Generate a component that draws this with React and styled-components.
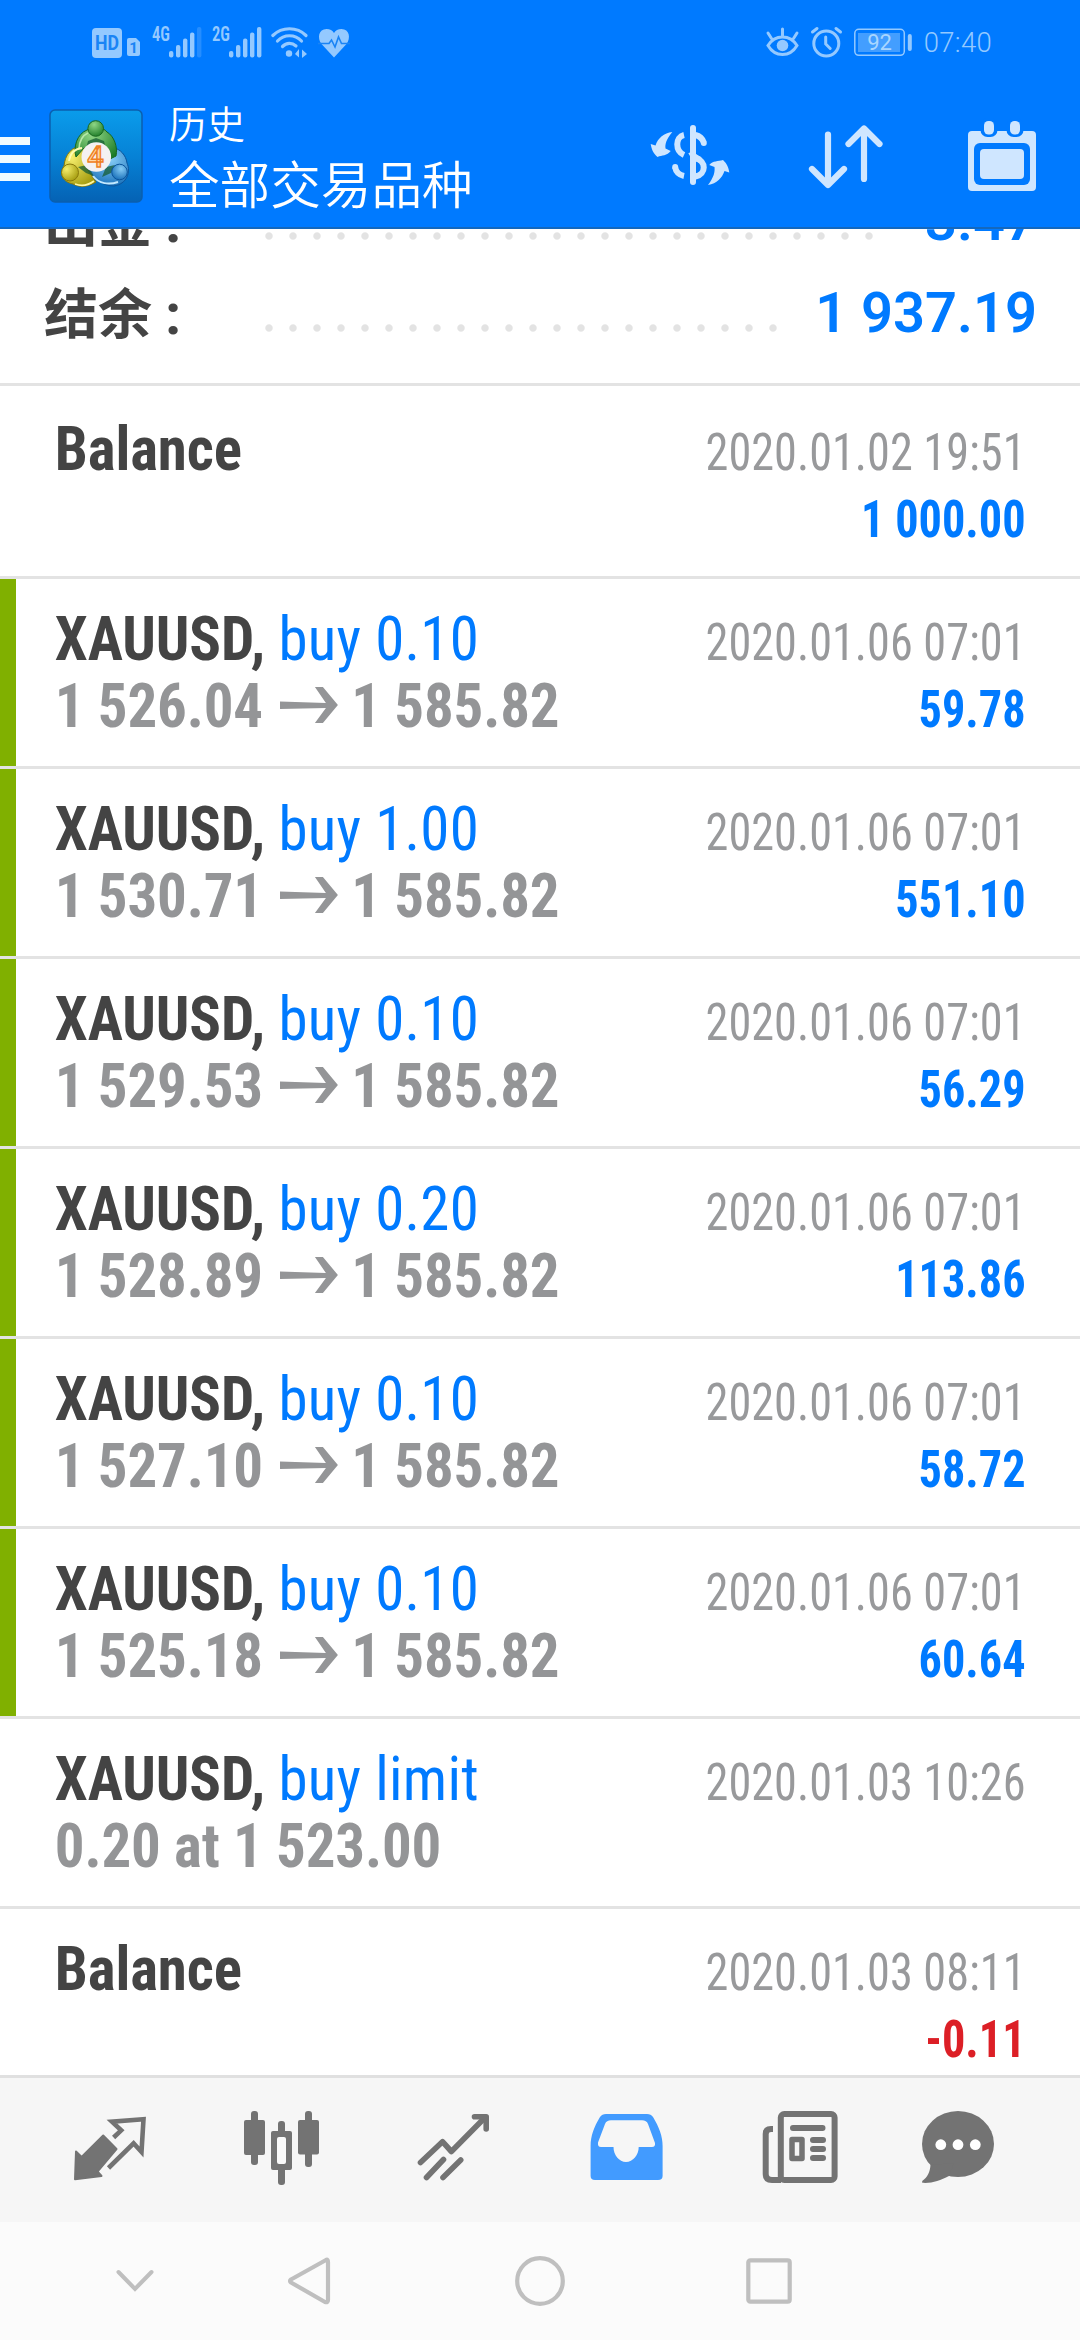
import React from 'react';
import styled, { createGlobalStyle } from 'styled-components';

const GlobalStyle = createGlobalStyle`
  body {
    margin: 0;
    background-color: #fff;
    font-family: Roboto, 'Noto Sans CJK SC', sans-serif;
  }
`;

const Screen = styled.div`
  display: flex;
  flex-direction: column;
  width: 1080px;
  height: 2340px;
  overflow: hidden;
`;

const Header = styled.header`
  flex: none;
  box-sizing: border-box;
  height: 229px;
  background-color: #007aff;
  border-bottom: 2px solid #1468bd;
`;

const StatusBar = styled.div`
  display: flex;
  align-items: center;
  justify-content: space-between;
  height: 85px;
  padding: 0 88px 0 92px;
  color: #94c9ff;
`;

const StatusGroup = styled.div`
  display: flex;
  align-items: center;
  gap: ${(p) => p.$gap}px;
`;

const StatusIcon = styled.svg`
  overflow: visible;
`;

const Clock = styled.span`
  font-size: 27.5px;
  font-weight: 350;
  line-height: 31px;
  letter-spacing: 0.3px;
`;

const Toolbar = styled.div`
  display: flex;
  align-items: center;
  height: 142px;
`;

const MenuButton = styled.div`
  display: flex;
  flex-direction: column;
  gap: 10px;
  width: 49px;
  margin-top: 6px;
`;

const MenuLine = styled.div`
  width: 30px;
  height: 8px;
  background-color: #f0fbff;
`;

const Titles = styled.div`
  flex: 1;
  margin: 2px 0 0 26px;
  color: #fff;
  font-family: 'Noto Sans CJK SC', sans-serif;
  font-weight: 350;
`;

const Title = styled.div`
  font-size: 38px;
  line-height: 50px;
`;

const Subtitle = styled.div`
  font-size: 50.6px;
  line-height: 70px;
`;

const Actions = styled.div`
  display: flex;
  gap: 70px;
  margin-top: -2px;
  padding-right: 35px;
  color: #cfe6ff;
`;

const History = styled.main`
  flex: 1;
  overflow: hidden;
`;

const Summary = styled.section`
  margin-top: -54px;
  padding-bottom: 24px;
  border-bottom: 3px solid #e3e3e3;
`;

const SummaryRow = styled.div`
  display: flex;
  height: 92px;
  padding: 0 43px 0 44px;
  line-height: 92px;
  font-size: 56px;
`;

const SummaryLabel = styled.span`
  width: 213px;
  color: #444;
  font-family: 'Noto Sans CJK SC', sans-serif;
  font-size: 54px;
  font-weight: 700;
  line-height: 87px;
  white-space: nowrap;
`;

const Colon = styled.span`
  margin-left: 13px;
  font-family: Roboto, sans-serif;
  font-size: 58px;
`;

const Dots = styled.div`
  flex: 1;
  height: 8px;
  margin: 57px 36px 0 0;
  background: radial-gradient(circle at center, #e3e3e3 3.2px, transparent 4.2px) 0 0 / 24px 8px repeat-x;
`;

const SummaryValue = styled.span`
  color: #007aff;
  font-weight: 600;
`;

const Row = styled.div`
  display: flex;
  height: 187px;
  padding-top: ${(p) => p.$top || 0}px;
  border-bottom: 3px solid #e3e3e3;
  font-family: 'Roboto Condensed', Roboto, sans-serif;
  line-height: 67px;
  white-space: nowrap;
`;

const Marker = styled.div`
  width: 16px;
  height: 187px;
  background-color: ${(p) => (p.$filled ? '#80b000' : 'transparent')};
`;

const Deal = styled.div`
  flex: 1;
  padding: 26px 0 0 40px;
  font-size: 62px;
  transform: scaleX(0.95);
  transform-origin: 16px 0;
`;

const Symbol = styled.span`
  color: #444;
  font-weight: 700;
  letter-spacing: -0.1px;
`;

const Action = styled.span`
  color: #007aff;
  letter-spacing: 0.3px;
`;

const Price = styled.div`
  color: #949597;
  font-weight: 700;
  letter-spacing: -0.15px;
`;

const ArrowIcon = styled.svg`
  width: 61px;
  height: 36px;
  margin: 0 14px 0 18px;
  vertical-align: 4px;
`;

const Result = styled.div`
  padding: 30px 54px 0 0;
  font-size: 52px;
  text-align: right;
  transform: scaleX(0.89);
  transform-origin: calc(100% - 54px) 0;
`;

const Time = styled.div`
  color: #98999b;
`;

const Profit = styled.div`
  color: ${(p) => (p.$loss ? '#dc1f26' : '#007aff')};
  font-weight: 700;
`;

const TabBar = styled.nav`
  display: flex;
  flex: none;
  height: 144px;
  padding-left: 24px;
  border-top: 3px solid #e0e0e0;
  background-color: #f6f6f6;
`;

const Tab = styled.svg`
  width: 172px;
  height: 144px;
  color: ${(p) => (p.$active ? '#429bff' : '#737373')};
`;

const SystemBar = styled.div`
  display: grid;
  flex: none;
  grid-template-columns: 174px 231px 229px 60px;
  align-items: center;
  height: 118px;
  padding-left: 105px;
  background-color: #fbfbfb;
  color: #bfbfbf;
`;

const deals = [
  { symbol: 'Balance', time: '2020.01.02 19:51', profit: '1 000.00' },
  { symbol: 'XAUUSD', action: 'buy 0.10', open: '1 526.04', close: '1 585.82', time: '2020.01.06 07:01', profit: '59.78' },
  { symbol: 'XAUUSD', action: 'buy 1.00', open: '1 530.71', close: '1 585.82', time: '2020.01.06 07:01', profit: '551.10' },
  { symbol: 'XAUUSD', action: 'buy 0.10', open: '1 529.53', close: '1 585.82', time: '2020.01.06 07:01', profit: '56.29' },
  { symbol: 'XAUUSD', action: 'buy 0.20', open: '1 528.89', close: '1 585.82', time: '2020.01.06 07:01', profit: '113.86' },
  { symbol: 'XAUUSD', action: 'buy 0.10', open: '1 527.10', close: '1 585.82', time: '2020.01.06 07:01', profit: '58.72' },
  { symbol: 'XAUUSD', action: 'buy 0.10', open: '1 525.18', close: '1 585.82', time: '2020.01.06 07:01', profit: '60.64' },
  { symbol: 'XAUUSD', action: 'buy limit', note: '0.20 at 1 523.00', time: '2020.01.03 10:26' },
  { symbol: 'Balance', time: '2020.01.03 08:11', profit: '-0.11' },
];

const HdIcon = () => (
  <StatusIcon width="49" height="31" viewBox="0 0 49 31">
    <rect y="1" width="30" height="30" rx="4" fill="currentColor" />
    <text x="15" y="23" fontSize="20" fontWeight="700" textAnchor="middle" fill="#1a84f5" textLength="24" lengthAdjust="spacingAndGlyphs">HD</text>
    <path d="M37 11h7l4 4v12a2 2 0 0 1-2 2h-9a2 2 0 0 1-2-2V13a2 2 0 0 1 2-2z" fill="currentColor" />
    <text x="41.5" y="26" fontSize="15" fontWeight="700" textAnchor="middle" fill="#1a84f5">1</text>
  </StatusIcon>
);

const SignalIcon = ({ label, weak }) => (
  <StatusIcon width="50" height="31" viewBox="0 0 50 31">
    <text x="1" y="14" fontSize="19.5" fontWeight="600" fontFamily="'Roboto Condensed', Roboto, sans-serif" textLength="18" lengthAdjust="spacingAndGlyphs" fill="currentColor">{label}</text>
    <g fill="currentColor">
      <rect x="18" y="24" width="4.4" height="6.5" rx="2" />
      <rect x="25" y="18" width="4.4" height="12.5" rx="2" />
      <rect x="32" y="11.5" width="4.4" height="19" rx="2" />
      <rect x="39" y="5.5" width="4.4" height="25" rx="2" />
      <rect x="46" y="0" width="4.4" height="30.5" rx="2" opacity={weak ? 0.25 : 1} />
    </g>
  </StatusIcon>
);

const WifiIcon = () => (
  <StatusIcon width="37" height="31" viewBox="0 0 37 31" fill="none" stroke="currentColor" strokeWidth="3.2" strokeLinecap="round">
    <path d="M1.8 8.5C11-.5 26-.5 35 8.5M6.5 14C13 7 24 7 30.5 14M11.5 19.5C15.5 15.5 21 15.5 25 19" />
    <circle cx="18" cy="26.5" r="3.2" fill="currentColor" stroke="none" />
    <path d="M28 22v8.500l-4-3.500zM31 31v-8.500l5 4.500z" fill="currentColor" stroke="none" />
  </StatusIcon>
);

const HeartIcon = () => (
  <StatusIcon width="32" height="31" viewBox="0 0 32 31">
    <path d="M16 30.5L3.5 17C-1 11 .5 2 8.5 2c3.500 0 6 1.500 7.500 4 1.500-2.500 4-4 7.500-4 8 0 9.500 9 5 15z" fill="currentColor" />
    <path d="M0 16.500h11l2.500-3.500 3.500 7 3.500-10 3 6.500H32" fill="none" stroke="#1a84f5" strokeWidth="1.6" />
  </StatusIcon>
);

const EyeIcon = () => (
  <StatusIcon width="33" height="31" viewBox="0 0 33 31" fill="none" stroke="currentColor" strokeWidth="3" strokeLinecap="round">
    <path d="M2 18.500c7-11.500 22-11.500 29 0-7 12-22 12-29 0zM16.500 2v7M2 6l3.500 5.500M31 6l-3.500 5.500" />
    <circle cx="16.5" cy="18.5" r="5.8" fill="currentColor" stroke="none" />
  </StatusIcon>
);

const AlarmIcon = () => (
  <StatusIcon width="31" height="31" viewBox="0 0 31 31" fill="none" stroke="currentColor" strokeWidth="3" strokeLinecap="round">
    <circle cx="15.3" cy="16.5" r="12.5" />
    <path d="M14.700 10v7l4.500 4.500M1.500 5l4.500-3.500M29.500 5L25 1.500" />
  </StatusIcon>
);

const BatteryIcon = () => (
  <StatusIcon width="58" height="31" viewBox="0 0 58 31">
    <rect x=".8" y="2.3" width="49.5" height="26" rx="4" fill="none" stroke="currentColor" strokeWidth="1.5" />
    <rect x="4" y="6" width="42" height="19" fill="currentColor" opacity=".45" />
    <rect x="53.8" y="7" width="4" height="17" rx="2" fill="currentColor" />
    <text x="25.5" y="23" fontSize="22" textAnchor="middle" fill="#a9d6ff">92</text>
  </StatusIcon>
);

const Logo = () => (
  <svg width="94" height="94" viewBox="0 0 94 94">
    <defs>
      <linearGradient id="tile" x1="0" y1="0" x2="0" y2="1">
        <stop offset="0" stopColor="#0a9ceb" />
        <stop offset=".5" stopColor="#0682d6" />
        <stop offset="1" stopColor="#0562b4" />
      </linearGradient>
      <radialGradient id="green" cx=".4" cy=".25" r=".8">
        <stop offset="0" stopColor="#8fd685" />
        <stop offset="1" stopColor="#1d7c27" />
      </radialGradient>
      <radialGradient id="yellow" cx=".3" cy=".3" r=".8">
        <stop offset="0" stopColor="#f5ee6c" />
        <stop offset="1" stopColor="#a39a0c" />
      </radialGradient>
      <radialGradient id="blue" cx=".6" cy=".3" r=".8">
        <stop offset="0" stopColor="#87cdf6" />
        <stop offset="1" stopColor="#0d66b3" />
      </radialGradient>
    </defs>
    <rect x="1" y="1" width="92" height="92" rx="5" fill="url(#tile)" stroke="#0b5fae" strokeWidth="1.5" />
    <path d="M38 39C27 49 43 77 65 77C78 75 82 63 78 54C77 46 71 40 65 39z" fill="url(#blue)" stroke="#0b549b" />
    <path d="M36 36C22 37 16 46 15 57C10 66 14 73 24 75C33 80 42 76 47 73L37 58z" fill="url(#yellow)" stroke="#8a7a0a" />
    <path d="M27 48C24 38 28 25 38 21C45 16 54 18 58 23C65 27 69 38 67 47L59 51L35 39z" fill="url(#green)" stroke="#17671f" />
    <path d="M30 40C30 32 34 26 39 24" fill="none" stroke="#b6e8a9" strokeWidth="1.6" />
    <path d="M20 52C21 44 26 40 33 39" fill="none" stroke="#fffbb0" strokeWidth="1.8" />
    <path d="M26 75C34 78 41 75 45 72" fill="none" stroke="#fff7a0" strokeWidth="1.8" />
    <path d="M44 67C50 75 60 76 69 73" fill="none" stroke="#c2e9ff" strokeWidth="2" />
    <path d="M39 32l8-3 8 3 2 8-20 0zM29 58l9-2 7 11-8-3zM57 58l9-2-4 8-9 4z" fill="#165c34" opacity=".75" />
    <circle cx="46.7" cy="19.5" r="7.8" fill="url(#green)" stroke="#17671f" />
    <circle cx="21" cy="63.5" r="8.5" fill="url(#yellow)" stroke="#8a7a0a" />
    <circle cx="70.5" cy="63" r="7.8" fill="url(#blue)" stroke="#0b549b" />
    <circle cx="47.3" cy="48" r="14.8" fill="#f4f1f2" />
    <text x="46.5" y="58" fontSize="29" fontWeight="500" textAnchor="middle" fill="#ffd9a8" stroke="#f07f22" strokeWidth="1.4">4</text>
  </svg>
);

const CurrencyIcon = () => (
  <svg width="90" height="80" viewBox="0 0 90 80" fill="none" stroke="currentColor" strokeWidth="6">
    <path d="M48 13v54" strokeLinecap="round" />
    <path d="M39 20C30 22 30 36 39 40" />
    <path d="M30 52C31 57 34 60 39 61M50.500 20c4 1 7 4 8.300 7.500" />
    <path d="M50.500 43c11 3 11 16 0 18.500" />
    <path d="M46 37C49 43 53 44 55 45" />
    <circle cx="30.2" cy="52" r="3" fill="currentColor" stroke="none" />
    <circle cx="58.8" cy="28" r="3" fill="currentColor" stroke="none" />
    <g fill="currentColor" stroke="none">
      <path d="M27.300 17C21 25 20 29 20.500 33.500L25.700 36C22 41 17 40 12.500 42C8 38 6.500 34 5.700 29L10.500 30.500C13 23 19 18 27.300 17z" />
      <path d="M63 70C69 62 70 57 69.500 52L64.300 50C68 45.500 73 46.500 78 45C82 49 83.500 52 84.300 57.500L79.500 56C77 63 72 68.500 63 70z" />
    </g>
  </svg>
);

const SortIcon = () => (
  <svg width="90" height="80" viewBox="0 0 90 80" fill="none" stroke="currentColor" strokeWidth="6.2" strokeLinecap="round" strokeLinejoin="round">
    <path d="M23 19.500v49M7 54l16 16 16-16M59 64V14M43.500 29L59 13.500 74.500 29" />
  </svg>
);

const CalendarIcon = () => (
  <svg width="80" height="80" viewBox="0 0 80 80">
    <rect x="3" y="16" width="68" height="60" rx="4" fill="currentColor" />
    <rect x="9" y="28" width="56" height="42" rx="6" fill="#007aff" />
    <rect x="15" y="34" width="44" height="30" rx="4" fill="currentColor" />
    <rect x="15.5" y="3" width="17" height="19" rx="7" fill="#007aff" />
    <rect x="41.5" y="3" width="17" height="19" rx="7" fill="#007aff" />
    <rect x="19" y="6" width="10" height="13.5" rx="4.5" fill="currentColor" />
    <rect x="45" y="6" width="10" height="13.5" rx="4.5" fill="currentColor" />
  </svg>
);

function renderDetails({ open, close, note }) {
  if (open) {
    return (
      <Price>
        {open}
        <ArrowIcon viewBox="0 0 58 36" preserveAspectRatio="none" fill="#949597">
          <path d="M0 14.500L46 16L35 0H43L58 18L43 36H35L46 21L0 22z" />
        </ArrowIcon>
        {close}
      </Price>
    );
  }
  return note ? <Price>{note}</Price> : null;
}

const DealRow = ({ deal, top }) => (
  <Row $top={top}>
    <Marker $filled={Boolean(deal.open)} />
    <Deal>
      <Symbol>{deal.action ? `${deal.symbol}, ` : deal.symbol}</Symbol>
      <Action>{deal.action}</Action>
      {renderDetails(deal)}
    </Deal>
    <Result>
      <Time>{deal.time}</Time>
      {deal.profit && <Profit $loss={deal.profit.startsWith('-')}>{deal.profit}</Profit>}
    </Result>
  </Row>
);

const Tabs = () => (
  <TabBar>
    <Tab viewBox="0 0 172 144">
      <path d="M52 73.500L57.600 79L79.200 57.500L92.500 71L73.500 93.500L77.500 98L51 101.200z" fill="currentColor" stroke="currentColor" strokeWidth="2" strokeLinejoin="round" />
      <path d="M89.600 59.500L97.200 52.300L88 43.700L119.500 41.300L117.500 74L109.600 65.300L84.500 90" fill="none" stroke="currentColor" strokeWidth="4.6" />
    </Tab>
    <Tab viewBox="0 0 172 144" fill="currentColor">
      <rect x="55" y="33" width="7" height="54" rx="3" />
      <rect x="48" y="42" width="21" height="35" rx="2" />
      <rect x="82" y="43" width="7" height="64" rx="3" />
      <rect x="75" y="53" width="21" height="39" rx="2" />
      <rect x="81" y="59" width="9" height="27" rx="2" fill="#f9f9f9" />
      <rect x="109" y="33" width="7" height="56" rx="3" />
      <rect x="102" y="42" width="21" height="34.5" rx="2" />
    </Tab>
    <Tab viewBox="0 0 172 144" fill="none" stroke="currentColor" strokeWidth="5.6" strokeLinecap="round" strokeLinejoin="round">
      <path d="M52.500 84.500L74.500 63.700L83.400 73.500L117 39.500M58.500 99.500L75.500 81.500M75 99.500L92.700 82" />
      <path d="M106.500 38.800H118.200V51" />
    </Tab>
    <Tab viewBox="0 0 172 144" $active>
      <path fillRule="evenodd" fill="currentColor" d="M66 36H107Q111 36 113 39C119 49 122.600 58 122.600 68V98Q122.600 102 118 102H55Q50.600 102 50.600 98V68C50.600 58 54 49 60 39Q62 36 66 36zM71 42.300Q66.500 42.300 65 46L58 64.500Q57.500 69 61 69H73.500C73.500 77 79 84 86 84C93 84 98.700 77 98.700 69H112Q115.500 69 115 65L108 46Q106.500 42.300 102 42.300z" />
    </Tab>
    <Tab viewBox="0 0 172 144" fill="none" stroke="currentColor">
      <path d="M61 51H59Q53.700 51 53.700 56V96Q53.700 102 60 102H69" strokeWidth="6" />
      <rect x="68.8" y="36" width="53.8" height="66" rx="3.5" strokeWidth="6" />
      <rect x="80" y="61.5" width="10" height="19" strokeWidth="5.5" strokeLinejoin="round" />
      <path d="M81 50H110.500M101 62H111M101 71H111M101 80H111" strokeWidth="6" strokeLinecap="round" />
    </Tab>
    <Tab viewBox="0 0 172 144">
      <ellipse cx="74" cy="66" rx="36" ry="33" fill="currentColor" />
      <path d="M46.500 87C46 94 43.500 99.500 38.200 103V104.800C48 105.500 56 102.500 65 98L70 85z" fill="currentColor" />
      <circle cx="56.8" cy="66.7" r="5.4" fill="#fff" />
      <circle cx="74" cy="66.7" r="5.4" fill="#fff" />
      <circle cx="91.3" cy="66.7" r="5.4" fill="#fff" />
    </Tab>
  </TabBar>
);

const SystemKeys = () => (
  <SystemBar>
    <svg width="60" height="60" viewBox="0 0 60 60" fill="none" stroke="currentColor" strokeWidth="4" strokeLinecap="round">
      <path d="M13.500 21L30 38L46.500 21" />
    </svg>
    <svg width="60" height="60" viewBox="0 0 60 60" fill="none" stroke="currentColor" strokeWidth="4.2" strokeLinejoin="round">
      <path d="M47 9Q49 8 49 11V49Q49 52 46 51L12 31.500Q10 30 12 28.500z" />
    </svg>
    <svg width="60" height="60" viewBox="0 0 60 60" fill="none" stroke="currentColor" strokeWidth="4.2">
      <circle cx="30" cy="30" r="22.8" />
    </svg>
    <svg width="60" height="60" viewBox="0 0 60 60" fill="none" stroke="currentColor" strokeWidth="4.2">
      <rect x="9.3" y="9.3" width="41.4" height="41.4" rx="2" />
    </svg>
  </SystemBar>
);

export default () => (
  <Screen>
    <GlobalStyle />
    <Header>
      <StatusBar>
        <StatusGroup $gap={10}>
          <HdIcon />
          <SignalIcon label="4G" weak />
          <SignalIcon label="2G" />
          <WifiIcon />
          <HeartIcon />
        </StatusGroup>
        <StatusGroup $gap={12}>
          <EyeIcon />
          <AlarmIcon />
          <BatteryIcon />
          <Clock>07:40</Clock>
        </StatusGroup>
      </StatusBar>
      <Toolbar>
        <MenuButton>
          <MenuLine />
          <MenuLine />
          <MenuLine />
        </MenuButton>
        <Logo />
        <Titles>
          <Title>历史</Title>
          <Subtitle>全部交易品种</Subtitle>
        </Titles>
        <Actions>
          <CurrencyIcon />
          <SortIcon />
          <CalendarIcon />
        </Actions>
      </Toolbar>
    </Header>
    <History>
      <Summary>
        <SummaryRow>
          <SummaryLabel>出金<Colon>:</Colon></SummaryLabel>
          <Dots />
          <SummaryValue>3.47</SummaryValue>
        </SummaryRow>
        <SummaryRow>
          <SummaryLabel>结余<Colon>:</Colon></SummaryLabel>
          <Dots />
          <SummaryValue>1 937.19</SummaryValue>
        </SummaryRow>
      </Summary>
      {deals.map((deal, i) => (
        <DealRow key={i} deal={deal} top={i === 0 ? 3 : 0} />
      ))}
    </History>
    <Tabs />
    <SystemKeys />
  </Screen>
);
